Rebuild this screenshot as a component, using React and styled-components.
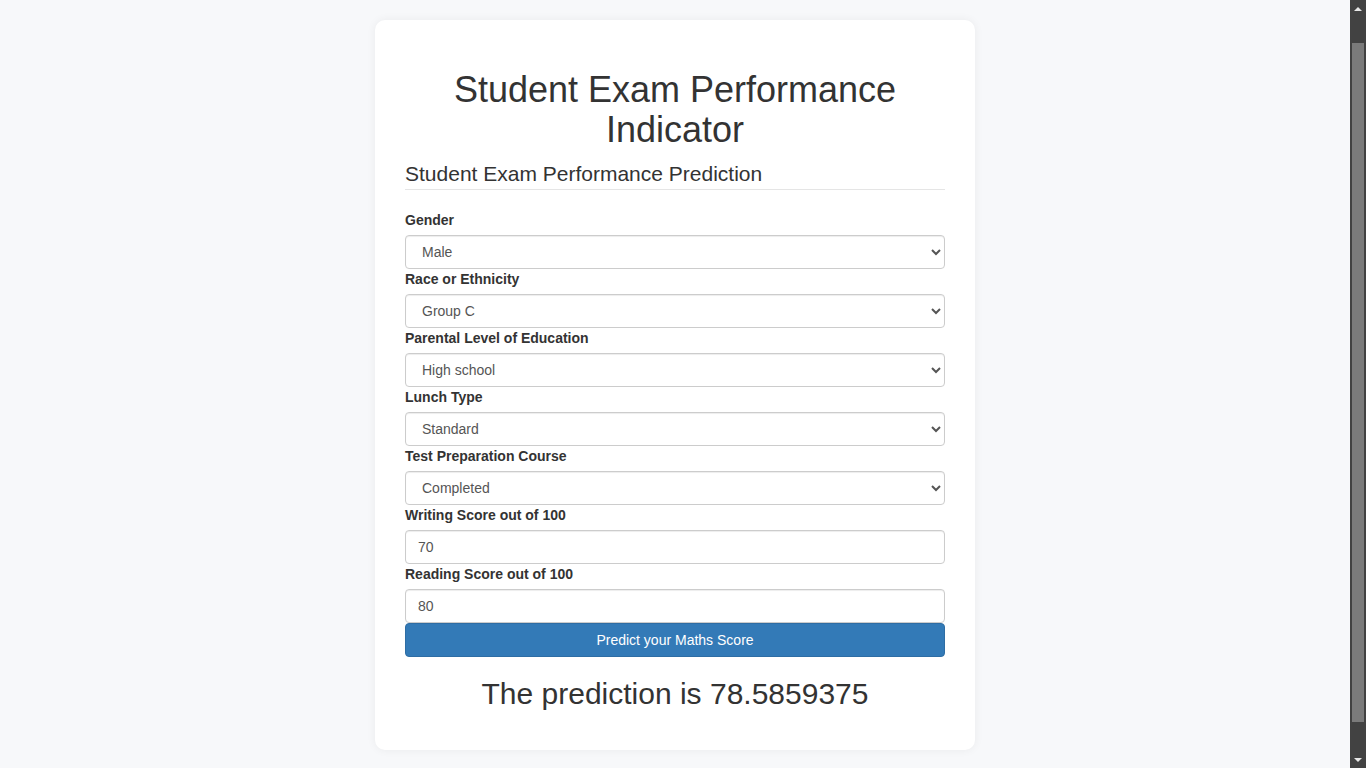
import { styled, createGlobalStyle } from 'styled-components';

const GlobalStyle = createGlobalStyle`
  html {
    background: #f7f8fa;
  }
  body {
    margin: 0;
    background: #f7f8fa;
    font-family: "Liberation Sans", Arial, Helvetica, sans-serif;
    font-size: 14px;
    line-height: 1.42857143;
    color: #333;
  }
  * {
    box-sizing: border-box;
  }
`;

const Page = styled.div`
  padding: 20px 16px 20px 0;
`;

// dark window scrollbar seen on the right edge of the screenshot
const ScrollBar = styled.div`
  position: fixed;
  top: 0;
  right: 0;
  width: 16px;
  height: 100vh;
  display: flex;
  flex-direction: column;
  background: #424242;
`;

const ArrowBox = styled.div`
  height: 17px;
  display: flex;
  align-items: center;
  justify-content: center;

  &::before {
    content: '';
    border-left: 4px solid transparent;
    border-right: 4px solid transparent;
    ${({ $down }) =>
      $down ? 'border-top: 4px solid #e8e8e8;' : 'border-bottom: 4px solid #e8e8e8;'}
  }
`;

const Track = styled.div`
  flex: 1;
  display: flex;
  padding: 26px 2px 29px;
`;

const Thumb = styled.div`
  flex: 1;
  background: #7b7b7b;
`;

const Card = styled.div`
  width: 600px;
  margin: 0 auto;
  padding: 30px;
  background: #fff;
  border-radius: 10px;
  box-shadow: 0 0 10px rgba(0, 0, 0, 0.06);
`;

const Title = styled.h1`
  margin: 20px 0 10px;
  font-size: 36px;
  font-weight: 500;
  line-height: 1.1;
  text-align: center;
`;

const Fieldset = styled.fieldset`
  margin: 0;
  padding: 0;
  border: 0;
  min-width: 0;
`;

const Legend = styled.legend`
  display: block;
  width: 100%;
  padding: 0;
  margin-bottom: 20px;
  font-size: 21px;
  line-height: inherit;
  border-bottom: 1px solid #e5e5e5;
`;

const Group = styled.div`
  display: flex;
  flex-direction: column;
  align-items: flex-start;
`;

const Label = styled.label`
  display: inline-block;
  margin-bottom: 5px;
  font-weight: 700;
`;

const fieldCss = `
  display: block;
  width: 100%;
  height: 34px;
  padding: 6px 12px;
  font-family: inherit;
  font-size: 14px;
  line-height: 1.42857143;
  color: #555;
  background-color: #fff;
  border: 1px solid #ccc;
  border-radius: 4px;
  box-shadow: inset 0 1px 1px rgba(0, 0, 0, 0.075);
  margin: 0;
`;

const Select = styled.select`
  ${fieldCss}
`;

const Input = styled.input`
  ${fieldCss}
`;

const Button = styled.button`
  display: block;
  width: 100%;
  height: 34px;
  padding: 6px 12px;
  font-family: inherit;
  font-size: 14px;
  line-height: 1.42857143;
  color: #fff;
  background-color: #337ab7;
  border: 1px solid #2e6da4;
  border-radius: 4px;
  cursor: pointer;
`;

const Result = styled.h2`
  margin: 20px 0 10px;
  font-size: 30px;
  font-weight: 500;
  line-height: 1.1;
  text-align: center;
`;

const fields = [
  { label: 'Gender', value: 'male', options: [['male', 'Male'], ['female', 'Female']] },
  {
    label: 'Race or Ethnicity',
    value: 'group C',
    options: [
      ['group A', 'Group A'],
      ['group B', 'Group B'],
      ['group C', 'Group C'],
      ['group D', 'Group D'],
      ['group E', 'Group E'],
    ],
  },
  {
    label: 'Parental Level of Education',
    value: 'high school',
    options: [
      ["associate's degree", "Associate's degree"],
      ["bachelor's degree", "Bachelor's degree"],
      ['high school', 'High school'],
      ["master's degree", "Master's degree"],
      ['some college', 'Some college'],
      ['some high school', 'Some high school'],
    ],
  },
  { label: 'Lunch Type', value: 'standard', options: [['free/reduced', 'Free/reduced'], ['standard', 'Standard']] },
  { label: 'Test Preparation Course', value: 'completed', options: [['none', 'None'], ['completed', 'Completed']] },
];

export default function App() {
  return (
    <Page>
      <GlobalStyle />
      <Card>
        <Title>Student Exam Performance Indicator</Title>
        <form onSubmit={(e) => e.preventDefault()}>
          <Fieldset>
            <Legend>Student Exam Performance Prediction</Legend>
            {fields.map((f) => (
              <Group key={f.label}>
                <Label>{f.label}</Label>
                <Select defaultValue={f.value}>
                  {f.options.map(([v, t]) => (
                    <option key={v} value={v}>{t}</option>
                  ))}
                </Select>
              </Group>
            ))}
            <Group>
              <Label>Writing Score out of 100</Label>
              <Input type="number" defaultValue="70" min="0" max="100" />
            </Group>
            <Group>
              <Label>Reading Score out of 100</Label>
              <Input type="number" defaultValue="80" min="0" max="100" />
            </Group>
            <Button type="submit">Predict your Maths Score</Button>
          </Fieldset>
        </form>
        <Result>The prediction is 78.5859375</Result>
      </Card>
      <ScrollBar>
        <ArrowBox />
        <Track>
          <Thumb />
        </Track>
        <ArrowBox $down />
      </ScrollBar>
    </Page>
  );
}
